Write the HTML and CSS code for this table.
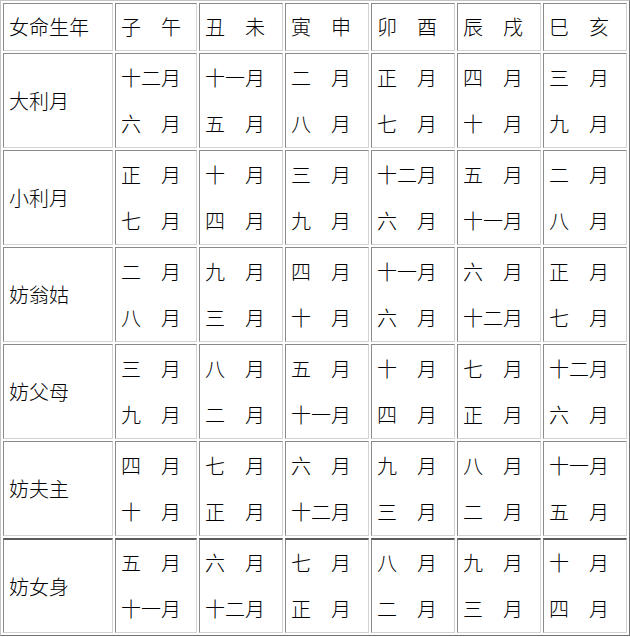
FILE: index.html
```html
<!DOCTYPE html>
<html lang="zh">
<head>
<meta charset="utf-8">
<title>女命生年</title>
<link rel="stylesheet" href="styles.css">
</head>
<body>
<table class="grid">
  <colgroup>
    <col class="c-label"><col class="c-narrow"><col class="c-std"><col class="c-std"><col class="c-std"><col class="c-std"><col class="c-std">
  </colgroup>
  <tr class="head">
    <td>女命生年</td><td>子　午</td><td>丑　未</td><td>寅　申</td><td>卯　酉</td><td>辰　戌</td><td>巳　亥</td>
  </tr>
  <tr class="row">
    <td class="label">大利月</td>
    <td><div class="ln">十二月</div><div class="ln">六　月</div></td>
    <td><div class="ln">十一月</div><div class="ln">五　月</div></td>
    <td><div class="ln">二　月</div><div class="ln">八　月</div></td>
    <td><div class="ln">正　月</div><div class="ln">七　月</div></td>
    <td><div class="ln">四　月</div><div class="ln">十　月</div></td>
    <td><div class="ln">三　月</div><div class="ln">九　月</div></td>
  </tr>
  <tr class="row">
    <td class="label">小利月</td>
    <td><div class="ln">正　月</div><div class="ln">七　月</div></td>
    <td><div class="ln">十　月</div><div class="ln">四　月</div></td>
    <td><div class="ln">三　月</div><div class="ln">九　月</div></td>
    <td><div class="ln">十二月</div><div class="ln">六　月</div></td>
    <td><div class="ln">五　月</div><div class="ln">十一月</div></td>
    <td><div class="ln">二　月</div><div class="ln">八　月</div></td>
  </tr>
  <tr class="row">
    <td class="label">妨翁姑</td>
    <td><div class="ln">二　月</div><div class="ln">八　月</div></td>
    <td><div class="ln">九　月</div><div class="ln">三　月</div></td>
    <td><div class="ln">四　月</div><div class="ln">十　月</div></td>
    <td><div class="ln">十一月</div><div class="ln">六　月</div></td>
    <td><div class="ln">六　月</div><div class="ln">十二月</div></td>
    <td><div class="ln">正　月</div><div class="ln">七　月</div></td>
  </tr>
  <tr class="row">
    <td class="label">妨父母</td>
    <td><div class="ln">三　月</div><div class="ln">九　月</div></td>
    <td><div class="ln">八　月</div><div class="ln">二　月</div></td>
    <td><div class="ln">五　月</div><div class="ln">十一月</div></td>
    <td><div class="ln">十　月</div><div class="ln">四　月</div></td>
    <td><div class="ln">七　月</div><div class="ln">正　月</div></td>
    <td><div class="ln">十二月</div><div class="ln">六　月</div></td>
  </tr>
  <tr class="row">
    <td class="label">妨夫主</td>
    <td><div class="ln">四　月</div><div class="ln">十　月</div></td>
    <td><div class="ln">七　月</div><div class="ln">正　月</div></td>
    <td><div class="ln">六　月</div><div class="ln">十二月</div></td>
    <td><div class="ln">九　月</div><div class="ln">三　月</div></td>
    <td><div class="ln">八　月</div><div class="ln">二　月</div></td>
    <td><div class="ln">十一月</div><div class="ln">五　月</div></td>
  </tr>
  <tr class="row last">
    <td class="label">妨女身</td>
    <td><div class="ln">五　月</div><div class="ln">十一月</div></td>
    <td><div class="ln">六　月</div><div class="ln">十二月</div></td>
    <td><div class="ln">七　月</div><div class="ln">正　月</div></td>
    <td><div class="ln">八　月</div><div class="ln">二　月</div></td>
    <td><div class="ln">九　月</div><div class="ln">三　月</div></td>
    <td><div class="ln">十　月</div><div class="ln">四　月</div></td>
  </tr>
</table>
</body>
</html>
```
FILE: styles.css
```css
html, body {
  margin: 0;
  padding: 0;
  background: #ffffff;
}

.grid {
  width: 630px;
  table-layout: fixed;
  border-collapse: separate;
  border-spacing: 2px;
  border-style: solid;
  border-width: 1px;
  border-color: #c4c4c4 #707070 #707070 #c4c4c4;
  font-family: "Noto Sans CJK SC", "Noto Sans CJK JP", sans-serif;
  font-size: 20px;
  font-weight: 300;
  color: #000000;
}

.c-label { width: 110px; }
.c-narrow { width: 82px; }
.c-std { width: 84px; }

.grid td {
  box-sizing: border-box;
  border-style: solid;
  border-width: 1px;
  border-color: #8a8a8a #d2d2d2 #d2d2d2 #8a8a8a;
  padding: 0 0 0 5px;
  vertical-align: middle;
  white-space: nowrap;
  text-align: left;
}

.head td {
  height: 48px;
  line-height: 46px;
}

.row td {
  height: 95px;
}

.ln {
  line-height: 46px;
}

.last td {
  border-top-color: #5a5a5a;
  border-top-width: 2px;
}
```
